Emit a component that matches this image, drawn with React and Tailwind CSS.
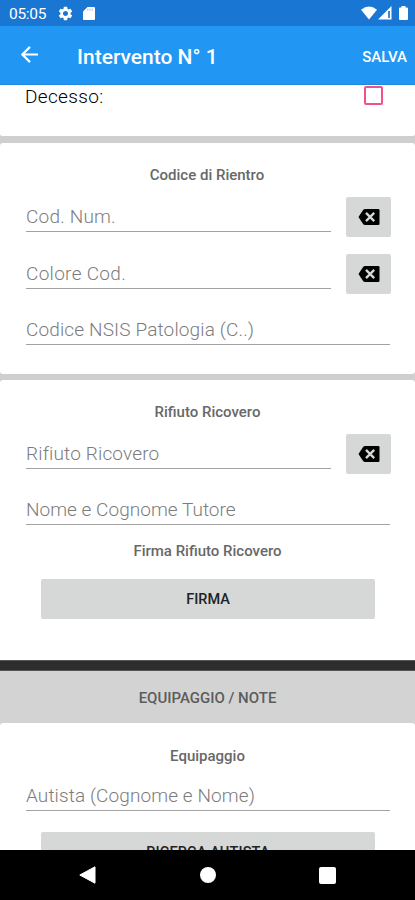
import React from "react";

function BackspaceIcon() {
  return (
    <svg width="22" height="16" viewBox="0 0 22 16" className="-mt-px">
      <path d="M7 0h13.200q1.300 0 1.300 1.300v13.400q0 1.300-1.300 1.300H7q-1.200 0-1.900-1L.5 8l4.600-7Q5.800 0 7 0z" fill="#000" />
      <path d="M8 3.900l8.200 8.200M16.200 3.900l-8.200 8.200" stroke="#d6d7d7" strokeWidth="2.300" />
    </svg>
  );
}

function HintField({ label, tracking = "tracking-[0.1px]", className = "" }) {
  return (
    <div className={`h-8 border-b-[1.5px] border-[#a3a3a3] text-[19px] leading-[34px] font-light text-[#7c7c7c] ${className}`}>
      <span className={`whitespace-nowrap ${tracking}`}>{label}</span>
    </div>
  );
}

function ClearRow({ label, tracking, className = "" }) {
  return (
    <div className={`flex h-10 gap-[15px] ${className}`}>
      <HintField label={label} tracking={tracking} className="mt-[3px] w-[305px] shrink-0" />
      <button className="flex h-10 w-[45px] shrink-0 items-center justify-center rounded-[2px] bg-[#d6d7d7]">
        <BackspaceIcon />
      </button>
    </div>
  );
}

function Title({ children, className = "" }) {
  return (
    <div className={`h-5 text-center text-[15px] leading-[21px] font-medium text-[#686868] ${className}`}>
      {children}
    </div>
  );
}

export default function App() {
  return (
    <div className="flex h-[900px] w-[415px] flex-col overflow-hidden bg-[#cfcfcf] font-[Roboto,sans-serif]">
      <div className="flex h-[26px] shrink-0 items-center bg-[#1976d2] pl-[9px] text-white">
        <span className="w-[38px] pt-px text-[15.5px] leading-[26px] tracking-[-0.3px]">05:05</span>
        <svg className="ml-[10px]" width="17" height="17" viewBox="0 0 24 24" fill="#fff">
          <path d="M19.140 12.940c.04-.3.06-.61.06-.94 0-.32-.02-.64-.07-.94l2.030-1.580c.18-.14.23-.41.12-.61l-1.920-3.320c-.12-.22-.37-.29-.59-.22l-2.390.96c-.5-.38-1.030-.7-1.620-.94l-.36-2.540c-.04-.24-.24-.41-.48-.41h-3.840c-.24 0-.43.17-.47.41l-.36 2.540c-.59.24-1.130.57-1.620.94l-2.390-.96c-.22-.08-.47 0-.59.22L2.740 8.870c-.12.21-.08.47.12.61l2.030 1.580c-.05.3-.09.63-.09.94s.02.64.07.94l-2.030 1.580c-.18.14-.23.41-.12.61l1.920 3.320c.12.22.37.29.59.22l2.390-.96c.5.38 1.030.7 1.620.94l.36 2.540c.05.24.24.41.48.41h3.840c.24 0 .44-.17.47-.41l.36-2.540c.59-.24 1.130-.56 1.620-.94l2.390.96c.22.08.47 0 .59-.22l1.920-3.320c.12-.22.07-.47-.12-.61l-2.010-1.580zM12 15.600c-1.980 0-3.600-1.620-3.600-3.600s1.620-3.600 3.600-3.600 3.600 1.620 3.600 3.600-1.620 3.600-3.600 3.600z" />
        </svg>
        <svg className="ml-[9px]" width="12" height="15" viewBox="0 0 12 15">
          <path d="M4.500 1H11q1 0 1 1v11q0 1-1 1H1q-1 0-1-1V5.500z" fill="#fff" />
          <path d="M4.800 2.500v2.300M7 2.500v2.300M9.200 2.500v2.300" stroke="#a9c8ec" strokeWidth="1" />
        </svg>
        <svg className="ml-auto" width="16" height="14" viewBox="0 0 16 14">
          <path d="M8 13.500 0 3.800Q8-2.600 16 3.800z" fill="#fff" />
        </svg>
        <svg className="ml-[1px]" width="14" height="14" viewBox="0 0 14 14">
          <path d="M13.500 0v13.500H0z" fill="#fff" />
          <path d="M11 5v7" stroke="#1976d2" strokeWidth="1.700" />
        </svg>
        <svg className="mr-[7px] ml-[7px]" width="9" height="14" viewBox="0 0 9 14">
          <path d="M2.500 0h4v1.500H8q1 0 1 1V13q0 1-1 1H1q-1 0-1-1V2.500q0-1 1-1h1.500z" fill="#fff" />
        </svg>
      </div>

      <div className="flex h-[59px] shrink-0 items-center border-b border-[#1e88e5] bg-[#2196f3] pl-[21px] text-white">
        <svg className="-mt-px" width="17" height="17" viewBox="0 0 17 17" fill="none" stroke="#fff" strokeWidth="2.200">
          <path d="M17 8.500H1.500M9 .9 1.400 8.500 9 16.100" />
        </svg>
        <span className="ml-[39px] pt-[3px] text-[21px] leading-8 font-medium whitespace-nowrap">Intervento N° 1</span>
        <span className="mr-[8px] ml-auto pt-[3px] text-[15px] leading-8 font-medium">SALVA</span>
      </div>

      <div className="flex h-[765px] shrink-0 flex-col overflow-hidden">
        <div className="flex h-[51px] shrink-0 justify-between rounded-b-[2px] bg-white pr-[32px] pl-[25px]">
          <span className="text-[19px] leading-[23px] font-light tracking-[0.35px] text-black">Decesso:</span>
          <span className="mt-[1px] h-[19px] w-[19px] rounded-[2px] border-2 border-[#f4508a]" />
        </div>

        <div className="mt-[7px] h-[231px] shrink-0 rounded-[3px] bg-white px-[26px] pt-[22px]">
          <Title className="mr-px">Codice di Rientro</Title>
          <ClearRow className="mt-3" label="Cod. Num." tracking="tracking-[0.2px]" />
          <ClearRow className="mt-[17px]" label="Colore Cod." tracking="tracking-[0.3px]" />
          <HintField className="mt-[19px] w-[364px]" label="Codice NSIS Patologia (C..)" tracking="tracking-[0.14px]" />
        </div>

        <div className="mt-[6px] h-[280px] shrink-0 rounded-t-[3px] bg-white px-[26px] pt-[22px]">
          <Title>Rifiuto Ricovero</Title>
          <ClearRow className="mt-3" label="Rifiuto Ricovero" tracking="tracking-[0.15px]" />
          <HintField className="mt-[19px] w-[364px]" label="Nome e Cognome Tutore" tracking="tracking-[0.03px]" />
          <Title className="mt-[16px]">Firma Rifiuto Ricovero</Title>
          <button className="mx-[15px] mt-[18px] block h-10 w-[334px] rounded-[2px] bg-[#d6d7d7] pt-px text-[14.5px] leading-[39px] font-medium text-[#222]">
            <span className="block pt-px leading-[38px]">FIRMA</span>
          </button>
        </div>

        <div className="h-[11px] shrink-0 border-y border-[#555] bg-[#2d2d2d]" />
        <div className="h-[52px] shrink-0 bg-[#d3d3d3] text-center text-[15px] leading-[54px] font-medium text-[#5c5c5c]">
          EQUIPAGGIO / NOTE
        </div>

        <div className="h-[230px] shrink-0 rounded-t-[3px] bg-white px-[26px] pt-[23px]">
          <Title>Equipaggio</Title>
          <HintField className="mt-[13px] w-[364px]" label="Autista (Cognome e Nome)" />
          <button className="mx-[15px] mt-[21px] block h-10 w-[334px] rounded-[2px] bg-[#d6d7d7] text-[14.5px] font-medium tracking-[0.15px] text-[#222]">
            <span className="block pt-[2px] leading-[38px]">RICERCA AUTISTA</span>
          </button>
        </div>
      </div>

      <div className="flex h-[50px] shrink-0 items-center bg-black pl-[79px]">
        <svg width="17" height="18" viewBox="0 0 17 18">
          <path d="M16 .8v16.400L.8 9z" fill="#fff" stroke="#fff" strokeLinejoin="round" />
        </svg>
        <span className="ml-[104px] h-4 w-4 rounded-full bg-white" />
        <span className="ml-[103px] h-[17px] w-[17px] rounded-[2px] bg-white" />
      </div>
    </div>
  );
}
